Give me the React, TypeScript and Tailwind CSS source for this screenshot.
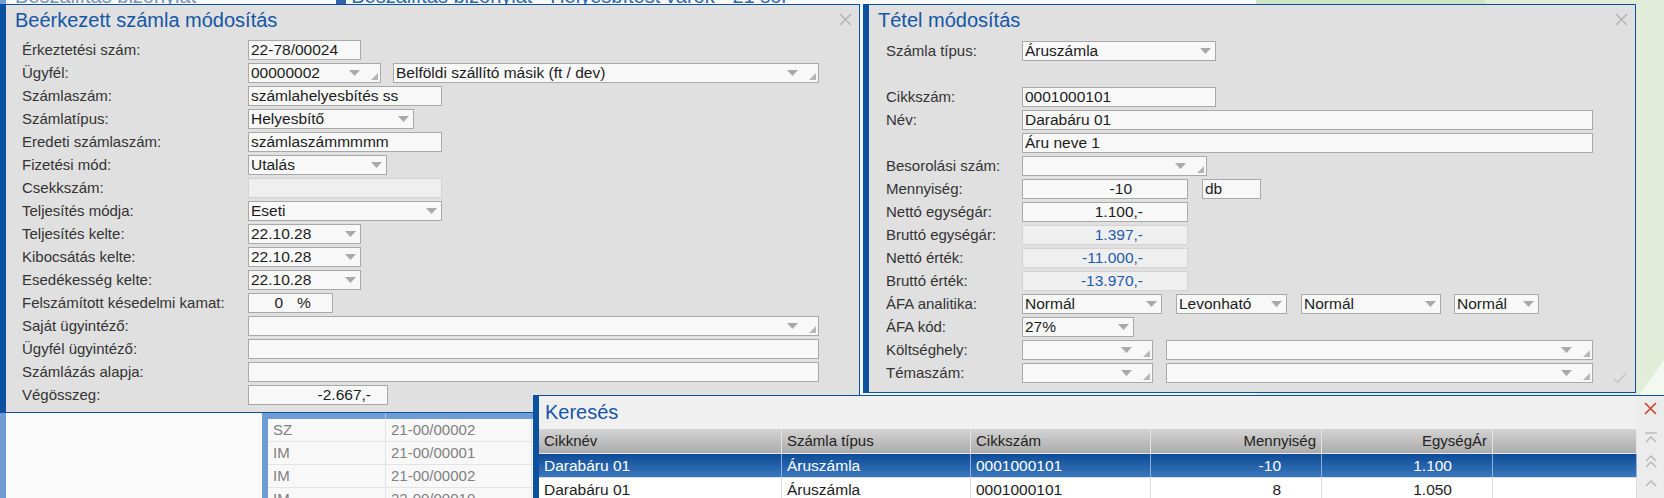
import React from 'react';

type FieldProps = {
  w: string;
  v?: string;
  dd?: boolean;
  grip?: boolean;
  ro?: boolean;
  num?: string;
  blue?: boolean;
  className?: string;
};

function Arrow() {
  return (
    <svg width="11" height="6" viewBox="0 0 11 6" className="shrink-0">
      <path d="M0 0H11L5.5 6Z" fill="#a9a9a9" />
    </svg>
  );
}

function Grip() {
  return (
    <svg width="7" height="7" viewBox="0 0 7 7" className="shrink-0 self-end mb-[2px] ml-[11px] mr-[2px]">
      <path d="M7 0V7H0Z" fill="#b5b5b5" />
    </svg>
  );
}

function CloseX({ color = '#b5b5b5' }: { color?: string }) {
  return (
    <svg width="13" height="13" viewBox="0 0 13 13">
      <path d="M1 1L12 12M12 1L1 12" stroke={color} strokeWidth="1.6" />
    </svg>
  );
}

function Field({ w, v, dd, grip, ro, num, blue, className = '' }: FieldProps) {
  return (
    <div
      className={`${w} ${className} h-[20px] shrink-0 flex items-center border ${
        ro ? 'bg-[#efefef] border-[#d3d3d3]' : 'bg-[#f8f8f8] border-[#a9a9a9]'
      }`}
    >
      <span
        className={`flex-1 min-w-0 whitespace-nowrap overflow-hidden pl-[2px] text-[15.5px] leading-[18px] ${
          blue ? 'text-[#1c5cab]' : 'text-[#1c1c1c]'
        } ${num ? `text-right ${num}` : ''}`}
      >
        {v}
      </span>
      {dd && (
        <span className={grip ? '' : 'mr-[4px]'}>
          <Arrow />
        </span>
      )}
      {grip && <Grip />}
    </div>
  );
}

function Row({ label, lw, children }: { label?: string; lw: string; children?: React.ReactNode }) {
  return (
    <div className="h-[20px] flex items-center">
      <div className={`${lw} shrink-0 text-[15px] leading-[20px] text-[#333] whitespace-nowrap`}>{label}</div>
      {children}
    </div>
  );
}

function BehindWindow() {
  const rows = [
    ['SZ', '21-00/00002'],
    ['IM', '21-00/00001'],
    ['IM', '21-00/00002'],
    ['IM', '22-00/00010'],
  ];
  return (
    <div className="absolute left-0 top-[-14px] w-[1256px] h-[512px] bg-[#fafafa] border-l-[6px] border-[#6d9dd3] flex flex-col">
      <div className="h-[18px] shrink-0 flex text-[20px] leading-[20px] whitespace-nowrap">
        <span className="ml-[9px] text-[#7393c2]">Beszállítás bizonylat</span>
        <span className="ml-[140px] mt-[8px] w-[10px] h-[10px] bg-[#2d66ae]" />
        <span className="ml-[5px] text-[#2a68b2]">Beszállítás bizonylat - Helyesbítést várók - 21 sor</span>
      </div>
      <div className="flex-1 flex">
        <div className="w-[256px] bg-[#fafafa]" />
        <div className="w-[6px] bg-[#6d9dd3]" />
        <div className="flex-1 flex flex-col">
          <div className="h-[391px] bg-[#f4f4f4]" />
          <div className="h-[24px] bg-[#6d9dd3] flex">
            <div className="w-[118px] border-r border-[#a9c5e6]" />
          </div>
          {rows.map((r, i) => (
            <div key={i} className="h-[23px] flex border-b border-[#e3e3e3] bg-[#f8f8f8] text-[15px] leading-[22px] text-[#808080]">
              <div className="w-[118px] pl-[5px] border-r border-[#e3e3e3]">{r[0]}</div>
              <div className="w-[146px] pl-[5px] border-r border-[#e3e3e3]">{r[1]}</div>
            </div>
          ))}
        </div>
      </div>
    </div>
  );
}

function InvoiceWindow() {
  const lw = 'w-[226px]';
  return (
    <div className="absolute left-0 top-[4px] w-[860px] h-[409px] bg-[#e0e0e0] border-l-[6px] border-t border-r border-b border-[#0c50a0] flex flex-col">
      <div className="absolute right-[7px] top-[8px]">
        <CloseX />
      </div>
      <div className="mt-[3px] h-[24px] pl-[9px] text-[20px] leading-[24px] text-[#1456a6]">Beérkezett számla módosítás</div>
      <div className="mt-[8px] pl-[16px] flex flex-col gap-[3px]">
        <Row label="Érkeztetési szám:" lw={lw}>
          <Field w="w-[113px]" v="22-78/00024" />
        </Row>
        <Row label="Ügyfél:" lw={lw}>
          <Field w="w-[133px]" v="00000002" dd grip />
          <Field w="w-[426px]" className="ml-[12px]" v="Belföldi szállító másik (ft / dev)" dd grip />
        </Row>
        <Row label="Számlaszám:" lw={lw}>
          <Field w="w-[194px]" v="számlahelyesbítés ss" />
        </Row>
        <Row label="Számlatípus:" lw={lw}>
          <Field w="w-[166px]" v="Helyesbítő" dd />
        </Row>
        <Row label="Eredeti számlaszám:" lw={lw}>
          <Field w="w-[194px]" v="számlaszámmmmm" />
        </Row>
        <Row label="Fizetési mód:" lw={lw}>
          <Field w="w-[139px]" v="Utalás" dd />
        </Row>
        <Row label="Csekkszám:" lw={lw}>
          <Field w="w-[194px]" ro />
        </Row>
        <Row label="Teljesítés módja:" lw={lw}>
          <Field w="w-[194px]" v="Eseti" dd />
        </Row>
        <Row label="Teljesítés kelte:" lw={lw}>
          <Field w="w-[113px]" v="22.10.28" dd />
        </Row>
        <Row label="Kibocsátás kelte:" lw={lw}>
          <Field w="w-[113px]" v="22.10.28" dd />
        </Row>
        <Row label="Esedékesség kelte:" lw={lw}>
          <Field w="w-[113px]" v="22.10.28" dd />
        </Row>
        <Row label="Felszámított késedelmi kamat:" lw={lw}>
          <div className="w-[85px] h-[20px] flex items-center border border-[#a9a9a9] bg-[#f8f8f8] text-[15.5px] leading-[18px] text-[#1c1c1c]">
            <span className="w-[34px] text-right">0</span>
            <span className="ml-[14px]">%</span>
          </div>
        </Row>
        <Row label="Saját ügyintéző:" lw={lw}>
          <Field w="w-[571px]" dd grip />
        </Row>
        <Row label="Ügyfél ügyintéző:" lw={lw}>
          <Field w="w-[571px]" />
        </Row>
        <Row label="Számlázás alapja:" lw={lw}>
          <Field w="w-[571px]" />
        </Row>
        <Row label="Végösszeg:" lw={lw}>
          <Field w="w-[140px]" v="-2.667,-" num="pr-[16px]" />
        </Row>
      </div>
    </div>
  );
}

function ItemWindow() {
  const lw = 'w-[136px]';
  return (
    <div className="absolute left-[863px] top-[4px] w-[773px] h-[389px] bg-[#e0e0e0] border-l-[6px] border-t border-r border-b border-[#0c50a0] flex flex-col">
      <div className="absolute right-[7px] top-[8px]">
        <CloseX />
      </div>
      <div className="absolute right-[8px] bottom-[8px]">
        <svg width="14" height="12" viewBox="0 0 14 12">
          <path d="M1 6.5L5 10.5L13 1" fill="none" stroke="#c4c4c4" strokeWidth="1.4" />
        </svg>
      </div>
      <div className="mt-[3px] h-[24px] pl-[9px] text-[20px] leading-[24px] text-[#1456a6]">Tétel módosítás</div>
      <div className="mt-[9px] pl-[17px] flex flex-col gap-[3px]">
        <Row label="Számla típus:" lw={lw}>
          <Field w="w-[194px]" v="Áruszámla" dd />
        </Row>
        <Row lw={lw} />
        <Row label="Cikkszám:" lw={lw}>
          <Field w="w-[194px]" v="0001000101" />
        </Row>
        <Row label="Név:" lw={lw}>
          <Field w="w-[571px]" v="Darabáru 01" />
        </Row>
        <Row lw={lw}>
          <Field w="w-[571px]" v="Áru neve 1" />
        </Row>
        <Row label="Besorolási szám:" lw={lw}>
          <Field w="w-[185px]" dd grip />
        </Row>
        <Row label="Mennyiség:" lw={lw}>
          <Field w="w-[166px]" v="-10" num="pr-[55px]" />
          <Field w="w-[59px]" className="ml-[14px]" v="db" />
        </Row>
        <Row label="Nettó egységár:" lw={lw}>
          <Field w="w-[166px]" v="1.100,-" num="pr-[44px]" />
        </Row>
        <Row label="Bruttó egységár:" lw={lw}>
          <Field w="w-[166px]" v="1.397,-" num="pr-[44px]" ro blue />
        </Row>
        <Row label="Nettó érték:" lw={lw}>
          <Field w="w-[166px]" v="-11.000,-" num="pr-[44px]" ro blue />
        </Row>
        <Row label="Bruttó érték:" lw={lw}>
          <Field w="w-[166px]" v="-13.970,-" num="pr-[44px]" ro blue />
        </Row>
        <Row label="ÁFA analitika:" lw={lw}>
          <Field w="w-[140px]" v="Normál" dd />
          <Field w="w-[111px]" className="ml-[14px]" v="Levonható" dd />
          <Field w="w-[140px]" className="ml-[14px]" v="Normál" dd />
          <Field w="w-[85px]" className="ml-[13px]" v="Normál" dd />
        </Row>
        <Row label="ÁFA kód:" lw={lw}>
          <Field w="w-[112px]" v="27%" dd />
        </Row>
        <Row label="Költséghely:" lw={lw}>
          <Field w="w-[131px]" dd grip />
          <Field w="w-[427px]" className="ml-[13px]" dd grip />
        </Row>
        <Row label="Témaszám:" lw={lw}>
          <Field w="w-[131px]" dd grip />
          <Field w="w-[427px]" className="ml-[13px]" dd grip />
        </Row>
      </div>
    </div>
  );
}

const cols = ['w-[243px]', 'w-[189px]', 'w-[180px]', 'w-[171px]', 'w-[171px]', 'w-[144px]'];

function SearchWindow() {
  const head = ['Cikknév', 'Számla típus', 'Cikkszám', 'Mennyiség', 'EgységÁr', ''];
  const rows = [
    ['Darabáru 01', 'Áruszámla', '0001000101', '-10', '1.100', ''],
    ['Darabáru 01', 'Áruszámla', '0001000101', '8', '1.050', ''],
  ];
  const right = (i: number) => i === 3 || i === 4;
  return (
    <div className="absolute left-[533px] top-[395px] w-[1131px] h-[110px] bg-[#f0f0f0] border-l-[6px] border-t border-[#0c50a0] flex">
      <div className="w-[1098px] flex flex-col">
        <div className="mt-[4px] h-[24px] pl-[6px] text-[20px] leading-[24px] text-[#1456a6]">Keresés</div>
        <div className="mt-[5px] h-[24px] flex bg-gradient-to-b from-[#d4d4d4] to-[#acacac] text-[15px] leading-[24px] text-[#222]">
          {head.map((h, i) => (
            <div
              key={i}
              className={`${cols[i]} border-r border-[#e4e4e4] ${right(i) ? 'text-right pr-[5px]' : 'pl-[5px]'}`}
            >
              {h}
            </div>
          ))}
        </div>
        <div className="h-[24px] flex bg-gradient-to-b from-[#0c4b97] to-[#3a78bf] text-[15.5px] leading-[24px] text-white border-t border-[#eaeaea]">
          {rows[0].map((c, i) => (
            <div
              key={i}
              className={`${cols[i]} border-r border-[#8fb0d8] ${right(i) ? 'text-right pr-[40px]' : 'pl-[5px]'}`}
            >
              {c}
            </div>
          ))}
        </div>
        <div className="h-[24px] flex bg-white text-[15.5px] leading-[24px] text-[#1c1c1c] border-t border-[#dcdcdc]">
          {rows[1].map((c, i) => (
            <div
              key={i}
              className={`${cols[i]} border-r border-[#dcdcdc] ${right(i) ? 'text-right pr-[40px]' : 'pl-[5px]'}`}
            >
              {c}
            </div>
          ))}
        </div>
      </div>
      <div className="flex-1 flex flex-col items-center bg-[#ececec]">
        <div className="mt-[6px]">
          <CloseX color="#d2402c" />
        </div>
        <div className="mt-[17px] flex flex-col items-center gap-[11px]">
          <svg width="14" height="12" viewBox="0 0 14 12">
            <path d="M1 1H13M2 10L7 5L12 10" fill="none" stroke="#b9b9b9" strokeWidth="1.5" />
          </svg>
          <svg width="14" height="13" viewBox="0 0 14 13">
            <path d="M2 6L7 1L12 6M2 12L7 7L12 12" fill="none" stroke="#b9b9b9" strokeWidth="1.5" />
          </svg>
          <svg width="14" height="8" viewBox="0 0 14 8">
            <path d="M2 7L7 2L12 7" fill="none" stroke="#b9b9b9" strokeWidth="1.5" />
          </svg>
        </div>
      </div>
    </div>
  );
}

export default function App() {
  return (
    <div className="relative w-[1664px] h-[498px] overflow-hidden bg-[#e1edd9] font-['Liberation_Sans',Arial,sans-serif]">
      <BehindWindow />
      <div className="absolute left-[1256px] top-0 w-[229px] h-[4px] bg-[#cfe3c5]" />
      <svg className="absolute left-[1636px] top-[340px]" width="28" height="60" viewBox="0 0 28 60">
        <path d="M0 60L28 20V60Z" fill="#f3f8f0" />
      </svg>
      <InvoiceWindow />
      <ItemWindow />
      <SearchWindow />
    </div>
  );
}
